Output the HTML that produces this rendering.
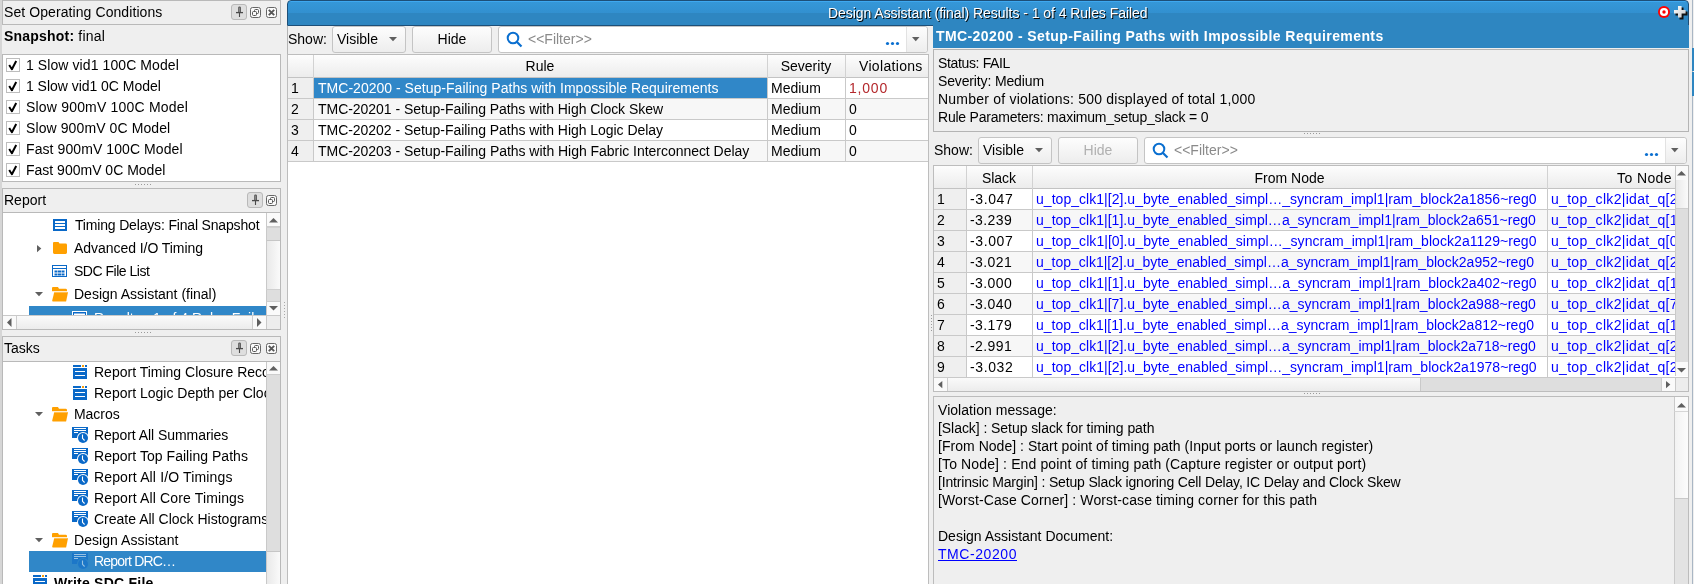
<!DOCTYPE html><html><head><meta charset="utf-8"><style>
*{margin:0;padding:0;box-sizing:border-box}
html,body{width:1694px;height:584px;overflow:hidden;background:#efefef;position:relative}
body{font-family:"Liberation Sans",sans-serif;font-size:14px;color:#000}
.t{position:absolute;white-space:pre;line-height:16px;will-change:transform}
.r{position:absolute}
.b{font-weight:bold}
.lnk{color:#0000ff}
svg{position:absolute;overflow:visible}
</style></head><body>
<div class="r" style="left:0px;top:0px;width:2px;height:584px;background:#d6d6d6"></div>
<div class="r" style="left:2px;top:0px;width:279px;height:25px;background:#efefef;border:1px solid #b9b9b9"></div>
<div class="t " style="left:4px;top:4px;letter-spacing:0.083px;">Set Operating Conditions</div>
<div class="r" style="left:231px;top:4px;width:16px;height:16px;background:#dedede;border:1px solid #b9b9b9;border-radius:3px"></div>
<svg style="left:231px;top:4px" width="16" height="16"><path d="M7.8 8.5V3.6Q7.8 3 8.5 3Q9.3 3 9.3 3.6V8.5" stroke="#4a4a4a" stroke-width="1.1" fill="none"/><path d="M5 8.6H12" stroke="#4a4a4a" stroke-width="1.3"/><path d="M8.5 8.6V13" stroke="#4a4a4a" stroke-width="1.1"/></svg>
<svg style="left:250px;top:7px" width="11" height="11"><rect x="0.5" y="0.5" width="10" height="10" rx="2" fill="#fafafa" stroke="#666"/><rect x="4.5" y="2.5" width="4" height="4" rx="1" fill="none" stroke="#555"/><rect x="2.5" y="4.5" width="4" height="4" rx="1" fill="#fafafa" stroke="#555"/></svg>
<svg style="left:266px;top:7px" width="11" height="11"><rect x="0.5" y="0.5" width="10" height="10" rx="2" fill="#fafafa" stroke="#666"/><path d="M2.8 2.8L8.2 8.2M8.2 2.8L2.8 8.2" stroke="#555" stroke-width="1.9"/></svg>
<div class="t " style="left:4px;top:28px;letter-spacing:0.2px"><b>Snapshot:</b> final</div>
<div class="r" style="left:2px;top:54px;width:279px;height:128px;background:#fff;border:1px solid #b9b9b9"></div>
<div class="r" style="left:6px;top:58px;width:14px;height:14px;background:#fff;border:1px solid #bdbdbd"></div>
<svg style="left:6px;top:58px" width="14" height="14"><path d="M3.2 7L5.9 11.2L10.2 3" stroke="#000" stroke-width="2" fill="none" stroke-linejoin="round"/></svg>
<div class="t " style="left:26px;top:57px;letter-spacing:0.086px;">1 Slow vid1 100C Model</div>
<div class="r" style="left:6px;top:79px;width:14px;height:14px;background:#fff;border:1px solid #bdbdbd"></div>
<svg style="left:6px;top:79px" width="14" height="14"><path d="M3.2 7L5.9 11.2L10.2 3" stroke="#000" stroke-width="2" fill="none" stroke-linejoin="round"/></svg>
<div class="t " style="left:26px;top:78px;letter-spacing:-0.032px;">1 Slow vid1 0C Model</div>
<div class="r" style="left:6px;top:100px;width:14px;height:14px;background:#fff;border:1px solid #bdbdbd"></div>
<svg style="left:6px;top:100px" width="14" height="14"><path d="M3.2 7L5.9 11.2L10.2 3" stroke="#000" stroke-width="2" fill="none" stroke-linejoin="round"/></svg>
<div class="t " style="left:26px;top:99px;letter-spacing:0.19px;">Slow 900mV 100C Model</div>
<div class="r" style="left:6px;top:121px;width:14px;height:14px;background:#fff;border:1px solid #bdbdbd"></div>
<svg style="left:6px;top:121px" width="14" height="14"><path d="M3.2 7L5.9 11.2L10.2 3" stroke="#000" stroke-width="2" fill="none" stroke-linejoin="round"/></svg>
<div class="t " style="left:26px;top:120px;letter-spacing:0.1px;">Slow 900mV 0C Model</div>
<div class="r" style="left:6px;top:142px;width:14px;height:14px;background:#fff;border:1px solid #bdbdbd"></div>
<svg style="left:6px;top:142px" width="14" height="14"><path d="M3.2 7L5.9 11.2L10.2 3" stroke="#000" stroke-width="2" fill="none" stroke-linejoin="round"/></svg>
<div class="t " style="left:26px;top:141px;letter-spacing:0.085px;">Fast 900mV 100C Model</div>
<div class="r" style="left:6px;top:163px;width:14px;height:14px;background:#fff;border:1px solid #bdbdbd"></div>
<svg style="left:6px;top:163px" width="14" height="14"><path d="M3.2 7L5.9 11.2L10.2 3" stroke="#000" stroke-width="2" fill="none" stroke-linejoin="round"/></svg>
<div class="t " style="left:26px;top:162px;">Fast 900mV 0C Model</div>
<div class="r" style="left:135px;top:184px;width:1px;height:1px;background:#9a9a9a"></div>
<div class="r" style="left:138px;top:184px;width:1px;height:1px;background:#9a9a9a"></div>
<div class="r" style="left:141px;top:184px;width:1px;height:1px;background:#9a9a9a"></div>
<div class="r" style="left:144px;top:184px;width:1px;height:1px;background:#9a9a9a"></div>
<div class="r" style="left:147px;top:184px;width:1px;height:1px;background:#9a9a9a"></div>
<div class="r" style="left:150px;top:184px;width:1px;height:1px;background:#9a9a9a"></div>
<div class="r" style="left:2px;top:188px;width:279px;height:25px;background:#efefef;border:1px solid #b9b9b9"></div>
<div class="t " style="left:4px;top:192px;">Report</div>
<div class="r" style="left:247px;top:192px;width:16px;height:16px;background:#dedede;border:1px solid #b9b9b9;border-radius:3px"></div>
<svg style="left:247px;top:192px" width="16" height="16"><path d="M7.8 8.5V3.6Q7.8 3 8.5 3Q9.3 3 9.3 3.6V8.5" stroke="#4a4a4a" stroke-width="1.1" fill="none"/><path d="M5 8.6H12" stroke="#4a4a4a" stroke-width="1.3"/><path d="M8.5 8.6V13" stroke="#4a4a4a" stroke-width="1.1"/></svg>
<svg style="left:266px;top:195px" width="11" height="11"><rect x="0.5" y="0.5" width="10" height="10" rx="2" fill="#fafafa" stroke="#666"/><rect x="4.5" y="2.5" width="4" height="4" rx="1" fill="none" stroke="#555"/><rect x="2.5" y="4.5" width="4" height="4" rx="1" fill="#fafafa" stroke="#555"/></svg>
<div class="r" style="left:2px;top:213px;width:279px;height:117px;background:#fff;border:1px solid #b9b9b9;border-top:none"></div>
<svg style="left:53px;top:219px" width="14" height="12"><rect x="0" y="0" width="14" height="12" fill="#0a69c8"/><rect x="2" y="2" width="10" height="2" fill="#fff"/><rect x="2" y="5" width="10" height="2" fill="#fff"/><rect x="2" y="8" width="10" height="2" fill="#fff"/></svg>
<div class="t " style="left:75px;top:217px;letter-spacing:-0.171px;">Timing Delays: Final Snapshot</div>
<svg style="left:37px;top:245px" width="6" height="8"><path d="M0 0L4.3 3.6L0 7.2Z" fill="#5f5f5f"/></svg>
<svg style="left:53px;top:242px" width="14" height="12"><path d="M0 1Q0 0 1 0H5.5L6.5 1.6H12.6Q14 1.6 14 3V10.6Q14 12 12.6 12H1.4Q0 12 0 10.6Z" fill="#ffa000"/></svg>
<div class="t " style="left:74px;top:240px;letter-spacing:-0.05px;">Advanced I/O Timing</div>
<svg style="left:52px;top:265px" width="15" height="12"><rect x="0.5" y="0.5" width="14" height="11" fill="#fff" stroke="#0a69c8"/><rect x="1" y="3" width="13" height="1" fill="#0a69c8"/><g fill="#0a69c8"><rect x="2.5" y="5.5" width="3" height="2"/><rect x="6" y="5.5" width="3" height="2"/><rect x="9.5" y="5.5" width="3" height="2"/><rect x="2.5" y="8.5" width="3" height="2"/><rect x="6" y="8.5" width="3" height="2"/><rect x="9.5" y="8.5" width="3" height="2"/></g></svg>
<div class="t " style="left:74px;top:263px;letter-spacing:-0.492px;">SDC File List</div>
<svg style="left:35px;top:292px" width="9" height="6"><path d="M0 0H8L4 4.3Z" fill="#5f5f5f"/></svg>
<svg style="left:52px;top:287px" width="17" height="15"><path d="M0 1Q0 0 1 0H6L7 1.8H13.6Q15 1.8 15 3V4.2H0Z" fill="#ffa000"/><path d="M0 4H15V5H0Z" fill="#ffa000"/><path d="M2.2 5.2H16L14.2 14.2Q14 14.6 13.5 14.6H1Q0 14.6 0.2 13.6Z" fill="#ffa000"/><path d="M0 4.6H15" stroke="#fff" stroke-width="0.9"/></svg>
<div class="t " style="left:74px;top:286px;">Design Assistant (final)</div>
<div class="r" style="left:29px;top:306px;width:237px;height:9px;background:#3087c8;overflow:hidden"></div>
<div class="r" style="left:29px;top:306px;width:237px;height:9px;overflow:hidden"><svg style="left:43px;top:5px" width="15" height="13"><rect x="0.5" y="0.5" width="14" height="12" fill="#0a69c8" stroke="#fff"/><rect x="2" y="2.5" width="11" height="2" fill="#fff"/></svg><div class="t" style="left:65px;top:4px;color:#fff">Results - 1 of 4 Rules Failed</div></div>
<div class="r" style="left:266px;top:213px;width:14px;height:102px;background:linear-gradient(to right,#e9e9e9,#fafafa);border-left:1px solid #c9c9c9"></div>
<div class="r" style="left:266px;top:213px;width:14px;height:14px;background:#fafafa;border-left:1px solid #c9c9c9;border-bottom:1px solid #cdcdcd"></div>
<svg style="left:269px;top:218px" width="9" height="5"><path d="M0 4.5L4.5 0L9 4.5Z" fill="#5f5f5f"/></svg>
<div class="r" style="left:266px;top:227px;width:14px;height:14px;background:#dedede;border-left:1px solid #c9c9c9;border-top:1px solid #d0d0d0;border-bottom:1px solid #c6c6c6"></div>
<div class="r" style="left:266px;top:301px;width:14px;height:14px;background:#fafafa;border-left:1px solid #c9c9c9;border-top:1px solid #cdcdcd"></div>
<svg style="left:269px;top:306px" width="9" height="5"><path d="M0 0H9L4.5 4.5Z" fill="#5f5f5f"/></svg>
<div class="r" style="left:266px;top:275px;width:14px;height:0px;"></div>
<div class="r" style="left:266px;top:289px;width:14px;height:12px;background:#dedede;border-left:1px solid #c9c9c9;border-top:1px solid #d0d0d0"></div>
<div class="r" style="left:3px;top:315px;width:263px;height:14px;background:linear-gradient(#fafafa,#ececec);border-top:1px solid #c9c9c9"></div>
<div class="r" style="left:3px;top:315px;width:14px;height:14px;background:#fafafa;border-top:1px solid #c9c9c9;border-right:1px solid #cdcdcd"></div>
<svg style="left:7px;top:318px" width="5" height="9"><path d="M4.5 0L0 4.5L4.5 9Z" fill="#5f5f5f"/></svg>
<div class="r" style="left:252px;top:315px;width:14px;height:14px;background:#fafafa;border-top:1px solid #c9c9c9;border-left:1px solid #cdcdcd"></div>
<svg style="left:257px;top:318px" width="5" height="9"><path d="M0 0L4.5 4.5L0 9Z" fill="#5f5f5f"/></svg>
<div class="r" style="left:266px;top:315px;width:14px;height:14px;background:#ededed;border-top:1px solid #c9c9c9;border-left:1px solid #c9c9c9"></div>
<div class="r" style="left:135px;top:332px;width:1px;height:1px;background:#9a9a9a"></div>
<div class="r" style="left:138px;top:332px;width:1px;height:1px;background:#9a9a9a"></div>
<div class="r" style="left:141px;top:332px;width:1px;height:1px;background:#9a9a9a"></div>
<div class="r" style="left:144px;top:332px;width:1px;height:1px;background:#9a9a9a"></div>
<div class="r" style="left:147px;top:332px;width:1px;height:1px;background:#9a9a9a"></div>
<div class="r" style="left:150px;top:332px;width:1px;height:1px;background:#9a9a9a"></div>
<div class="r" style="left:2px;top:336px;width:279px;height:26px;background:#efefef;border:1px solid #b9b9b9"></div>
<div class="t " style="left:4px;top:340px;">Tasks</div>
<div class="r" style="left:231px;top:340px;width:16px;height:16px;background:#dedede;border:1px solid #b9b9b9;border-radius:3px"></div>
<svg style="left:231px;top:340px" width="16" height="16"><path d="M7.8 8.5V3.6Q7.8 3 8.5 3Q9.3 3 9.3 3.6V8.5" stroke="#4a4a4a" stroke-width="1.1" fill="none"/><path d="M5 8.6H12" stroke="#4a4a4a" stroke-width="1.3"/><path d="M8.5 8.6V13" stroke="#4a4a4a" stroke-width="1.1"/></svg>
<svg style="left:250px;top:343px" width="11" height="11"><rect x="0.5" y="0.5" width="10" height="10" rx="2" fill="#fafafa" stroke="#666"/><rect x="4.5" y="2.5" width="4" height="4" rx="1" fill="none" stroke="#555"/><rect x="2.5" y="4.5" width="4" height="4" rx="1" fill="#fafafa" stroke="#555"/></svg>
<svg style="left:266px;top:343px" width="11" height="11"><rect x="0.5" y="0.5" width="10" height="10" rx="2" fill="#fafafa" stroke="#666"/><path d="M2.8 2.8L8.2 8.2M8.2 2.8L2.8 8.2" stroke="#555" stroke-width="1.9"/></svg>
<div class="r" style="left:2px;top:362px;width:279px;height:222px;background:#fff;border-left:1px solid #b9b9b9;border-right:1px solid #b9b9b9"></div>
<svg style="left:73px;top:365px" width="14" height="14"><rect x="0" y="0" width="8" height="2" fill="#0a69c8"/><rect x="9" y="0" width="2" height="2" fill="#f59d0b"/><rect x="12" y="0" width="2" height="2" fill="#0a69c8"/><rect x="0" y="3" width="14" height="11" fill="#0a69c8"/><rect x="2" y="6" width="10" height="1" fill="#fff"/><rect x="2" y="10" width="10" height="1" fill="#fff"/></svg>
<div class="t " style="left:94px;top:364px;">Report Timing Closure Recommendations</div>
<svg style="left:73px;top:386px" width="14" height="14"><rect x="0" y="0" width="8" height="2" fill="#0a69c8"/><rect x="9" y="0" width="2" height="2" fill="#f59d0b"/><rect x="12" y="0" width="2" height="2" fill="#0a69c8"/><rect x="0" y="3" width="14" height="11" fill="#0a69c8"/><rect x="2" y="6" width="10" height="1" fill="#fff"/><rect x="2" y="10" width="10" height="1" fill="#fff"/></svg>
<div class="t " style="left:94px;top:385px;">Report Logic Depth per Clock</div>
<svg style="left:35px;top:412px" width="9" height="6"><path d="M0 0H8L4 4.3Z" fill="#5f5f5f"/></svg>
<svg style="left:52px;top:407px" width="17" height="15"><path d="M0 1Q0 0 1 0H6L7 1.8H13.6Q15 1.8 15 3V4.2H0Z" fill="#ffa000"/><path d="M0 4H15V5H0Z" fill="#ffa000"/><path d="M2.2 5.2H16L14.2 14.2Q14 14.6 13.5 14.6H1Q0 14.6 0.2 13.6Z" fill="#ffa000"/><path d="M0 4.6H15" stroke="#fff" stroke-width="0.9"/></svg>
<div class="t " style="left:74px;top:406px;letter-spacing:-0.04px;">Macros</div>
<svg style="left:72px;top:427px;opacity:1" width="18" height="17"><rect x="0" y="0" width="16" height="11" fill="#0a69c8"/><rect x="2" y="1" width="12" height="1" fill="#fff"/><rect x="2" y="3" width="12" height="1" fill="#fff"/><rect x="2" y="5" width="4" height="1" fill="#fff"/><circle cx="11" cy="11" r="6" fill="#fff"/><circle cx="11" cy="11" r="5" fill="#0a69c8"/><path d="M10.5 7.5V11.3L12.6 13.5" stroke="#fff" stroke-width="1.1" fill="none"/></svg>
<div class="t " style="left:94px;top:427px;letter-spacing:-0.058px;">Report All Summaries</div>
<svg style="left:72px;top:448px;opacity:1" width="18" height="17"><rect x="0" y="0" width="16" height="11" fill="#0a69c8"/><rect x="2" y="1" width="12" height="1" fill="#fff"/><rect x="2" y="3" width="12" height="1" fill="#fff"/><rect x="2" y="5" width="4" height="1" fill="#fff"/><circle cx="11" cy="11" r="6" fill="#fff"/><circle cx="11" cy="11" r="5" fill="#0a69c8"/><path d="M10.5 7.5V11.3L12.6 13.5" stroke="#fff" stroke-width="1.1" fill="none"/></svg>
<div class="t " style="left:94px;top:448px;letter-spacing:0.039px;">Report Top Failing Paths</div>
<svg style="left:72px;top:469px;opacity:1" width="18" height="17"><rect x="0" y="0" width="16" height="11" fill="#0a69c8"/><rect x="2" y="1" width="12" height="1" fill="#fff"/><rect x="2" y="3" width="12" height="1" fill="#fff"/><rect x="2" y="5" width="4" height="1" fill="#fff"/><circle cx="11" cy="11" r="6" fill="#fff"/><circle cx="11" cy="11" r="5" fill="#0a69c8"/><path d="M10.5 7.5V11.3L12.6 13.5" stroke="#fff" stroke-width="1.1" fill="none"/></svg>
<div class="t " style="left:94px;top:469px;letter-spacing:0.143px;">Report All I/O Timings</div>
<svg style="left:72px;top:490px;opacity:1" width="18" height="17"><rect x="0" y="0" width="16" height="11" fill="#0a69c8"/><rect x="2" y="1" width="12" height="1" fill="#fff"/><rect x="2" y="3" width="12" height="1" fill="#fff"/><rect x="2" y="5" width="4" height="1" fill="#fff"/><circle cx="11" cy="11" r="6" fill="#fff"/><circle cx="11" cy="11" r="5" fill="#0a69c8"/><path d="M10.5 7.5V11.3L12.6 13.5" stroke="#fff" stroke-width="1.1" fill="none"/></svg>
<div class="t " style="left:94px;top:490px;letter-spacing:0.136px;">Report All Core Timings</div>
<svg style="left:72px;top:511px;opacity:1" width="18" height="17"><rect x="0" y="0" width="16" height="11" fill="#0a69c8"/><rect x="2" y="1" width="12" height="1" fill="#fff"/><rect x="2" y="3" width="12" height="1" fill="#fff"/><rect x="2" y="5" width="4" height="1" fill="#fff"/><circle cx="11" cy="11" r="6" fill="#fff"/><circle cx="11" cy="11" r="5" fill="#0a69c8"/><path d="M10.5 7.5V11.3L12.6 13.5" stroke="#fff" stroke-width="1.1" fill="none"/></svg>
<div class="t " style="left:94px;top:511px;">Create All Clock Histograms</div>
<svg style="left:35px;top:538px" width="9" height="6"><path d="M0 0H8L4 4.3Z" fill="#5f5f5f"/></svg>
<svg style="left:52px;top:533px" width="17" height="15"><path d="M0 1Q0 0 1 0H6L7 1.8H13.6Q15 1.8 15 3V4.2H0Z" fill="#ffa000"/><path d="M0 4H15V5H0Z" fill="#ffa000"/><path d="M2.2 5.2H16L14.2 14.2Q14 14.6 13.5 14.6H1Q0 14.6 0.2 13.6Z" fill="#ffa000"/><path d="M0 4.6H15" stroke="#fff" stroke-width="0.9"/></svg>
<div class="t " style="left:74px;top:532px;letter-spacing:0.06px;">Design Assistant</div>
<div class="r" style="left:29px;top:551px;width:237px;height:21px;background:#3087c8"></div>
<svg style="left:72px;top:553px;opacity:0.5" width="18" height="17"><rect x="0" y="0" width="16" height="11" fill="#0a69c8"/><rect x="2" y="1" width="12" height="1" fill="#fff"/><rect x="2" y="3" width="12" height="1" fill="#fff"/><rect x="2" y="5" width="4" height="1" fill="#fff"/><circle cx="11" cy="11" r="6" fill="#3087c8"/><circle cx="11" cy="11" r="5" fill="#0a69c8"/><path d="M10.5 7.5V11.3L12.6 13.5" stroke="#fff" stroke-width="1.1" fill="none"/></svg>
<div class="t " style="left:94px;top:553px;letter-spacing:-0.82px;color:#fff">Report DRC…</div>
<svg style="left:33px;top:575px" width="14" height="14"><rect x="0" y="0" width="8" height="2" fill="#0a69c8"/><rect x="9" y="0" width="2" height="2" fill="#f59d0b"/><rect x="12" y="0" width="2" height="2" fill="#0a69c8"/><rect x="0" y="3" width="14" height="11" fill="#0a69c8"/><rect x="2" y="6" width="10" height="1" fill="#fff"/><rect x="2" y="10" width="10" height="1" fill="#fff"/></svg>
<div class="t " style="left:54px;top:575px;letter-spacing:0.238px;font-weight:bold">Write SDC File</div>
<div class="r" style="left:266px;top:362px;width:14px;height:222px;background:linear-gradient(to right,#e9e9e9,#fafafa);border-left:1px solid #c9c9c9"></div>
<div class="r" style="left:266px;top:362px;width:14px;height:13px;background:#fafafa;border-left:1px solid #c9c9c9;border-bottom:1px solid #cdcdcd"></div>
<svg style="left:269px;top:366px" width="9" height="5"><path d="M0 4.5L4.5 0L9 4.5Z" fill="#5f5f5f"/></svg>
<div class="r" style="left:266px;top:375px;width:14px;height:177px;background:#dedede;border-left:1px solid #c9c9c9;border-bottom:1px solid #c6c6c6"></div>
<div class="r" style="left:281px;top:361px;width:6px;height:223px;background:#efefef"></div>
<div class="r" style="left:280px;top:361px;width:1px;height:223px;background:#b9b9b9"></div>
<div class="r" style="left:284px;top:302px;width:1px;height:1px;background:#a8a8a8"></div>
<div class="r" style="left:284px;top:305px;width:1px;height:1px;background:#a8a8a8"></div>
<div class="r" style="left:284px;top:308px;width:1px;height:1px;background:#a8a8a8"></div>
<div class="r" style="left:284px;top:311px;width:1px;height:1px;background:#a8a8a8"></div>
<div class="r" style="left:284px;top:314px;width:1px;height:1px;background:#a8a8a8"></div>
<div class="r" style="left:284px;top:317px;width:1px;height:1px;background:#a8a8a8"></div>
<div class="r" style="left:287px;top:0;width:1402px;height:26px;border:1px solid #1d4f78;border-radius:4px 4px 0 0;background:linear-gradient(#3ea8f0 0,#3ea8f0 1px,#3597d8 1px,#3290d0 12px,#2e86c1 12px,#2e86c1 100%)"></div>
<div class="t " style="left:828px;top:5px;letter-spacing:-0.049px;color:#fff;text-shadow:1px 1px 0 #0a0a0a">Design Assistant (final) Results - 1 of 4 Rules Failed</div>
<svg style="left:1656px;top:4px" width="16" height="16"><circle cx="8" cy="8" r="6" fill="#ff0000"/><circle cx="8" cy="8" r="4.1" fill="#fff"/><circle cx="8" cy="8" r="1.7" fill="#ff0000"/></svg>
<svg style="left:1673px;top:5px" width="16" height="16"><path d="M5.5 1.5h4v4h4v4h-4v4h-4v-4h-4v-4h4z" fill="#111" transform="translate(1,1)"/><defs><linearGradient id="cg" x1="0" y1="0" x2="1" y2="1"><stop offset="0" stop-color="#ffffff"/><stop offset="1" stop-color="#c8c8c8"/></linearGradient></defs><path d="M5 1h3.6v4h4v3.6h-4v4H5v-4H1V5h4z" fill="url(#cg)"/></svg>
<div class="r" style="left:1689px;top:26px;width:5px;height:558px;background:#efefef"></div>
<div class="r" style="left:1692px;top:0px;width:1px;height:584px;background:#a9b6c4"></div>
<div class="r" style="left:1692px;top:48px;width:2px;height:23px;background:#2e86c1"></div>
<div class="r" style="left:1692px;top:72px;width:2px;height:24px;background:#2e86c1"></div>
<div class="r" style="left:287px;top:26px;width:1px;height:558px;background:#b5b5b5"></div>
<div class="t " style="left:288px;top:31px;">Show:</div>
<div class="r" style="left:332px;top:26px;width:74px;height:27px;background:linear-gradient(#fdfdfd,#ededed);border:1px solid #c4c4c4;border-radius:3px"></div>
<div class="t " style="left:337px;top:31px;">Visible</div>
<svg style="left:389px;top:37px" width="9" height="5"><path d="M0 0H8L4 4.3Z" fill="#5f5f5f"/></svg>
<div class="r" style="left:412px;top:26px;width:80px;height:27px;background:linear-gradient(#fdfdfd,#ededed);border:1px solid #c4c4c4;border-radius:3px"></div>
<div class="t" style="left:412px;width:80px;text-align:center;top:31px;color:#000">Hide</div>
<div class="r" style="left:498px;top:26px;width:430px;height:27px;background:#fff;border:1px solid #c4c4c4;border-radius:3px"></div>
<div class="r" style="left:906px;top:27px;width:21px;height:25px;background:linear-gradient(#fdfdfd,#ededed);border-left:1px solid #e2e2e2;border-radius:0 3px 3px 0"></div>
<svg style="left:912px;top:37px" width="9" height="5"><path d="M0 0H7.5L3.75 4.2Z" fill="#5f5f5f"/></svg>
<svg style="left:506px;top:31px" width="18" height="18"><circle cx="7" cy="7" r="5.3" fill="none" stroke="#0a6fd0" stroke-width="2"/><path d="M11 11L15.5 15.5" stroke="#0a6fd0" stroke-width="2.2"/></svg>
<div class="t " style="left:528px;top:31px;color:#8a8a8a">&lt;&lt;Filter&gt;&gt;</div>
<svg style="left:885px;top:41px" width="14" height="5"><circle cx="2.5" cy="2.5" r="1.6" fill="#0a6fd0"/><circle cx="7.5" cy="2.5" r="1.6" fill="#0a6fd0"/><circle cx="12.5" cy="2.5" r="1.6" fill="#0a6fd0"/></svg>
<div class="r" style="left:287px;top:54px;width:642px;height:530px;background:#fff;border-top:1px solid #bdbdbd;border-left:1px solid #bdbdbd;border-right:1px solid #bdbdbd"></div>
<div class="r" style="left:288px;top:55px;width:640px;height:23px;background:linear-gradient(#fdfdfd,#ececec);border-bottom:1px solid #c3c3c3"></div>
<div class="r" style="left:313px;top:55px;width:1px;height:23px;background:#d2d2d2"></div>
<div class="r" style="left:767px;top:55px;width:1px;height:23px;background:#d2d2d2"></div>
<div class="r" style="left:845px;top:55px;width:1px;height:23px;background:#d2d2d2"></div>
<div class="t" style="left:313px;width:454px;text-align:center;top:58px">Rule</div>
<div class="t" style="left:767px;width:78px;text-align:center;top:58px">Severity</div>
<div class="t " style="left:859px;top:58px;letter-spacing:0.322px;">Violations</div>
<div class="r" style="left:288px;top:78px;width:640px;height:20px;background:#ffffff"></div>
<div class="r" style="left:288px;top:78px;width:25px;height:20px;background:#efefef"></div>
<div class="r" style="left:288px;top:98px;width:640px;height:1px;background:#c9c9c9"></div>
<div class="r" style="left:313px;top:78px;width:1px;height:21px;background:#c9c9c9"></div>
<div class="r" style="left:767px;top:78px;width:1px;height:21px;background:#c9c9c9"></div>
<div class="r" style="left:845px;top:78px;width:1px;height:21px;background:#c9c9c9"></div>
<div class="t " style="left:291px;top:80px;">1</div>
<div class="r" style="left:314px;top:78px;width:453px;height:20px;background:#3087c8"></div>
<div class="t " style="left:318px;top:80px;letter-spacing:0.022px;color:#fff">TMC-20200 - Setup-Failing Paths with Impossible Requirements</div>
<div class="t " style="left:849px;top:80px;letter-spacing:0.8px;color:#b4282c">1,000</div>
<div class="t " style="left:771px;top:80px;">Medium</div>
<div class="r" style="left:288px;top:99px;width:640px;height:20px;background:#f7f7f7"></div>
<div class="r" style="left:288px;top:99px;width:25px;height:20px;background:#efefef"></div>
<div class="r" style="left:288px;top:119px;width:640px;height:1px;background:#c9c9c9"></div>
<div class="r" style="left:313px;top:99px;width:1px;height:21px;background:#c9c9c9"></div>
<div class="r" style="left:767px;top:99px;width:1px;height:21px;background:#c9c9c9"></div>
<div class="r" style="left:845px;top:99px;width:1px;height:21px;background:#c9c9c9"></div>
<div class="t " style="left:291px;top:101px;">2</div>
<div class="t " style="left:318px;top:101px;letter-spacing:-0.039px;">TMC-20201 - Setup-Failing Paths with High Clock Skew</div>
<div class="t " style="left:849px;top:101px;">0</div>
<div class="t " style="left:771px;top:101px;">Medium</div>
<div class="r" style="left:288px;top:120px;width:640px;height:20px;background:#ffffff"></div>
<div class="r" style="left:288px;top:120px;width:25px;height:20px;background:#efefef"></div>
<div class="r" style="left:288px;top:140px;width:640px;height:1px;background:#c9c9c9"></div>
<div class="r" style="left:313px;top:120px;width:1px;height:21px;background:#c9c9c9"></div>
<div class="r" style="left:767px;top:120px;width:1px;height:21px;background:#c9c9c9"></div>
<div class="r" style="left:845px;top:120px;width:1px;height:21px;background:#c9c9c9"></div>
<div class="t " style="left:291px;top:122px;">3</div>
<div class="t " style="left:318px;top:122px;letter-spacing:-0.038px;">TMC-20202 - Setup-Failing Paths with High Logic Delay</div>
<div class="t " style="left:849px;top:122px;">0</div>
<div class="t " style="left:771px;top:122px;">Medium</div>
<div class="r" style="left:288px;top:141px;width:640px;height:20px;background:#f7f7f7"></div>
<div class="r" style="left:288px;top:141px;width:25px;height:20px;background:#efefef"></div>
<div class="r" style="left:288px;top:161px;width:640px;height:1px;background:#c9c9c9"></div>
<div class="r" style="left:313px;top:141px;width:1px;height:21px;background:#c9c9c9"></div>
<div class="r" style="left:767px;top:141px;width:1px;height:21px;background:#c9c9c9"></div>
<div class="r" style="left:845px;top:141px;width:1px;height:21px;background:#c9c9c9"></div>
<div class="t " style="left:291px;top:143px;">4</div>
<div class="t " style="left:318px;top:143px;letter-spacing:-0.033px;">TMC-20203 - Setup-Failing Paths with High Fabric Interconnect Delay</div>
<div class="t " style="left:849px;top:143px;">0</div>
<div class="t " style="left:771px;top:143px;">Medium</div>
<div class="r" style="left:929px;top:26px;width:760px;height:558px;background:#efefef"></div>
<div class="r" style="left:933px;top:25px;width:756px;height:23px;background:#2e86c1"></div>
<div class="t " style="left:936px;top:28px;letter-spacing:0.022px;color:#fff;font-weight:bold;letter-spacing:0.407px">TMC-20200 - Setup-Failing Paths with Impossible Requirements</div>
<div class="r" style="left:933px;top:49px;width:756px;height:83px;background:#efefef;border:1px solid #b4b4b4"></div>
<div class="t " style="left:938px;top:55px;letter-spacing:-0.355px;">Status: FAIL</div>
<div class="t " style="left:938px;top:73px;letter-spacing:-0.14px;">Severity: Medium</div>
<div class="t " style="left:938px;top:91px;letter-spacing:0.218px;">Number of violations: 500 displayed of total 1,000</div>
<div class="t " style="left:938px;top:109px;letter-spacing:-0.218px;">Rule Parameters: maximum_setup_slack = 0</div>
<div class="r" style="left:1304px;top:133px;width:1px;height:1px;background:#9a9a9a"></div>
<div class="r" style="left:1307px;top:133px;width:1px;height:1px;background:#9a9a9a"></div>
<div class="r" style="left:1310px;top:133px;width:1px;height:1px;background:#9a9a9a"></div>
<div class="r" style="left:1313px;top:133px;width:1px;height:1px;background:#9a9a9a"></div>
<div class="r" style="left:1316px;top:133px;width:1px;height:1px;background:#9a9a9a"></div>
<div class="r" style="left:1319px;top:133px;width:1px;height:1px;background:#9a9a9a"></div>
<div class="r" style="left:931px;top:315px;width:1px;height:1px;background:#9a9a9a"></div>
<div class="r" style="left:931px;top:318px;width:1px;height:1px;background:#9a9a9a"></div>
<div class="r" style="left:931px;top:321px;width:1px;height:1px;background:#9a9a9a"></div>
<div class="r" style="left:931px;top:324px;width:1px;height:1px;background:#9a9a9a"></div>
<div class="r" style="left:931px;top:327px;width:1px;height:1px;background:#9a9a9a"></div>
<div class="r" style="left:931px;top:330px;width:1px;height:1px;background:#9a9a9a"></div>
<div class="t " style="left:934px;top:142px;">Show:</div>
<div class="r" style="left:978px;top:137px;width:74px;height:27px;background:linear-gradient(#fdfdfd,#ededed);border:1px solid #c4c4c4;border-radius:3px"></div>
<div class="t " style="left:983px;top:142px;">Visible</div>
<svg style="left:1035px;top:148px" width="9" height="5"><path d="M0 0H8L4 4.3Z" fill="#5f5f5f"/></svg>
<div class="r" style="left:1058px;top:137px;width:80px;height:27px;background:linear-gradient(#fdfdfd,#ededed);border:1px solid #c4c4c4;border-radius:3px"></div>
<div class="t" style="left:1058px;width:80px;text-align:center;top:142px;color:#b0b0b0">Hide</div>
<div class="r" style="left:1144px;top:137px;width:543px;height:27px;background:#fff;border:1px solid #c4c4c4;border-radius:3px"></div>
<div class="r" style="left:1665px;top:138px;width:21px;height:25px;background:linear-gradient(#fdfdfd,#ededed);border-left:1px solid #e2e2e2;border-radius:0 3px 3px 0"></div>
<svg style="left:1671px;top:148px" width="9" height="5"><path d="M0 0H7.5L3.75 4.2Z" fill="#5f5f5f"/></svg>
<svg style="left:1152px;top:142px" width="18" height="18"><circle cx="7" cy="7" r="5.3" fill="none" stroke="#0a6fd0" stroke-width="2"/><path d="M11 11L15.5 15.5" stroke="#0a6fd0" stroke-width="2.2"/></svg>
<div class="t " style="left:1174px;top:142px;color:#8a8a8a">&lt;&lt;Filter&gt;&gt;</div>
<svg style="left:1644px;top:152px" width="14" height="5"><circle cx="2.5" cy="2.5" r="1.6" fill="#0a6fd0"/><circle cx="7.5" cy="2.5" r="1.6" fill="#0a6fd0"/><circle cx="12.5" cy="2.5" r="1.6" fill="#0a6fd0"/></svg>
<div class="r" style="left:933px;top:165px;width:756px;height:227px;background:#fff;border:1px solid #bdbdbd"></div>
<div class="r" style="left:934px;top:166px;width:741px;height:23px;background:linear-gradient(#fdfdfd,#ececec);border-bottom:1px solid #c3c3c3"></div>
<div class="r" style="left:966px;top:166px;width:1px;height:23px;background:#d2d2d2"></div>
<div class="r" style="left:1032px;top:166px;width:1px;height:23px;background:#d2d2d2"></div>
<div class="r" style="left:1547px;top:166px;width:1px;height:23px;background:#d2d2d2"></div>
<div class="t" style="left:966px;width:66px;text-align:center;top:170px">Slack</div>
<div class="t" style="left:1032px;width:515px;text-align:center;top:170px">From Node</div>
<div class="t" style="left:1547px;width:125px;text-align:right;top:170px;letter-spacing:0.4px">To Node</div>
<div class="r" style="left:934px;top:189px;width:741px;height:20px;background:#ffffff"></div>
<div class="r" style="left:934px;top:189px;width:32px;height:20px;background:#efefef"></div>
<div class="r" style="left:934px;top:209px;width:741px;height:1px;background:#c9c9c9"></div>
<div class="r" style="left:966px;top:189px;width:1px;height:21px;background:#c9c9c9"></div>
<div class="r" style="left:1032px;top:189px;width:1px;height:21px;background:#c9c9c9"></div>
<div class="r" style="left:1547px;top:189px;width:1px;height:21px;background:#c9c9c9"></div>
<div class="t " style="left:937px;top:191px;">1</div>
<div class="t " style="left:970px;top:191px;letter-spacing:0.62px;">-3.047</div>
<div class="t " style="left:1036px;top:191px;letter-spacing:0.036px;color:#0000ff">u_top_clk1|[2].u_byte_enabled_simpl…_syncram_impl1|ram_block2a1856~reg0</div>
<div class="r" style="left:1548px;top:189px;width:127px;height:20px;overflow:hidden"><div class="t lnk" style="left:3px;top:2px;letter-spacing:0.3px">u_top_clk2|idat_q[2</div></div>
<div class="r" style="left:934px;top:210px;width:741px;height:20px;background:#f7f7f7"></div>
<div class="r" style="left:934px;top:210px;width:32px;height:20px;background:#efefef"></div>
<div class="r" style="left:934px;top:230px;width:741px;height:1px;background:#c9c9c9"></div>
<div class="r" style="left:966px;top:210px;width:1px;height:21px;background:#c9c9c9"></div>
<div class="r" style="left:1032px;top:210px;width:1px;height:21px;background:#c9c9c9"></div>
<div class="r" style="left:1547px;top:210px;width:1px;height:21px;background:#c9c9c9"></div>
<div class="t " style="left:937px;top:212px;">2</div>
<div class="t " style="left:970px;top:212px;letter-spacing:0.42px;">-3.239</div>
<div class="t " style="left:1036px;top:212px;letter-spacing:0.027px;color:#0000ff">u_top_clk1|[1].u_byte_enabled_simpl…a_syncram_impl1|ram_block2a651~reg0</div>
<div class="r" style="left:1548px;top:210px;width:127px;height:20px;overflow:hidden"><div class="t lnk" style="left:3px;top:2px;letter-spacing:0.3px">u_top_clk2|idat_q[1</div></div>
<div class="r" style="left:934px;top:231px;width:741px;height:20px;background:#ffffff"></div>
<div class="r" style="left:934px;top:231px;width:32px;height:20px;background:#efefef"></div>
<div class="r" style="left:934px;top:251px;width:741px;height:1px;background:#c9c9c9"></div>
<div class="r" style="left:966px;top:231px;width:1px;height:21px;background:#c9c9c9"></div>
<div class="r" style="left:1032px;top:231px;width:1px;height:21px;background:#c9c9c9"></div>
<div class="r" style="left:1547px;top:231px;width:1px;height:21px;background:#c9c9c9"></div>
<div class="t " style="left:937px;top:233px;">3</div>
<div class="t " style="left:970px;top:233px;letter-spacing:0.62px;">-3.007</div>
<div class="t " style="left:1036px;top:233px;letter-spacing:0.05px;color:#0000ff">u_top_clk1|[0].u_byte_enabled_simpl…_syncram_impl1|ram_block2a1129~reg0</div>
<div class="r" style="left:1548px;top:231px;width:127px;height:20px;overflow:hidden"><div class="t lnk" style="left:3px;top:2px;letter-spacing:0.3px">u_top_clk2|idat_q[0</div></div>
<div class="r" style="left:934px;top:252px;width:741px;height:20px;background:#f7f7f7"></div>
<div class="r" style="left:934px;top:252px;width:32px;height:20px;background:#efefef"></div>
<div class="r" style="left:934px;top:272px;width:741px;height:1px;background:#c9c9c9"></div>
<div class="r" style="left:966px;top:252px;width:1px;height:21px;background:#c9c9c9"></div>
<div class="r" style="left:1032px;top:252px;width:1px;height:21px;background:#c9c9c9"></div>
<div class="r" style="left:1547px;top:252px;width:1px;height:21px;background:#c9c9c9"></div>
<div class="t " style="left:937px;top:254px;">4</div>
<div class="t " style="left:970px;top:254px;letter-spacing:0.42px;">-3.021</div>
<div class="t " style="left:1036px;top:254px;color:#0000ff">u_top_clk1|[2].u_byte_enabled_simpl…a_syncram_impl1|ram_block2a952~reg0</div>
<div class="r" style="left:1548px;top:252px;width:127px;height:20px;overflow:hidden"><div class="t lnk" style="left:3px;top:2px;letter-spacing:0.3px">u_top_clk2|idat_q[2</div></div>
<div class="r" style="left:934px;top:273px;width:741px;height:20px;background:#ffffff"></div>
<div class="r" style="left:934px;top:273px;width:32px;height:20px;background:#efefef"></div>
<div class="r" style="left:934px;top:293px;width:741px;height:1px;background:#c9c9c9"></div>
<div class="r" style="left:966px;top:273px;width:1px;height:21px;background:#c9c9c9"></div>
<div class="r" style="left:1032px;top:273px;width:1px;height:21px;background:#c9c9c9"></div>
<div class="r" style="left:1547px;top:273px;width:1px;height:21px;background:#c9c9c9"></div>
<div class="t " style="left:937px;top:275px;">5</div>
<div class="t " style="left:970px;top:275px;letter-spacing:0.42px;">-3.000</div>
<div class="t " style="left:1036px;top:275px;letter-spacing:0.036px;color:#0000ff">u_top_clk1|[1].u_byte_enabled_simpl…a_syncram_impl1|ram_block2a402~reg0</div>
<div class="r" style="left:1548px;top:273px;width:127px;height:20px;overflow:hidden"><div class="t lnk" style="left:3px;top:2px;letter-spacing:0.3px">u_top_clk2|idat_q[1</div></div>
<div class="r" style="left:934px;top:294px;width:741px;height:20px;background:#f7f7f7"></div>
<div class="r" style="left:934px;top:294px;width:32px;height:20px;background:#efefef"></div>
<div class="r" style="left:934px;top:314px;width:741px;height:1px;background:#c9c9c9"></div>
<div class="r" style="left:966px;top:294px;width:1px;height:21px;background:#c9c9c9"></div>
<div class="r" style="left:1032px;top:294px;width:1px;height:21px;background:#c9c9c9"></div>
<div class="r" style="left:1547px;top:294px;width:1px;height:21px;background:#c9c9c9"></div>
<div class="t " style="left:937px;top:296px;">6</div>
<div class="t " style="left:970px;top:296px;letter-spacing:0.42px;">-3.040</div>
<div class="t " style="left:1036px;top:296px;letter-spacing:0.027px;color:#0000ff">u_top_clk1|[7].u_byte_enabled_simpl…a_syncram_impl1|ram_block2a988~reg0</div>
<div class="r" style="left:1548px;top:294px;width:127px;height:20px;overflow:hidden"><div class="t lnk" style="left:3px;top:2px;letter-spacing:0.3px">u_top_clk2|idat_q[7</div></div>
<div class="r" style="left:934px;top:315px;width:741px;height:20px;background:#ffffff"></div>
<div class="r" style="left:934px;top:315px;width:32px;height:20px;background:#efefef"></div>
<div class="r" style="left:934px;top:335px;width:741px;height:1px;background:#c9c9c9"></div>
<div class="r" style="left:966px;top:315px;width:1px;height:21px;background:#c9c9c9"></div>
<div class="r" style="left:1032px;top:315px;width:1px;height:21px;background:#c9c9c9"></div>
<div class="r" style="left:1547px;top:315px;width:1px;height:21px;background:#c9c9c9"></div>
<div class="t " style="left:937px;top:317px;">7</div>
<div class="t " style="left:970px;top:317px;letter-spacing:0.42px;">-3.179</div>
<div class="t " style="left:1036px;top:317px;color:#0000ff">u_top_clk1|[1].u_byte_enabled_simpl…a_syncram_impl1|ram_block2a812~reg0</div>
<div class="r" style="left:1548px;top:315px;width:127px;height:20px;overflow:hidden"><div class="t lnk" style="left:3px;top:2px;letter-spacing:0.3px">u_top_clk2|idat_q[1</div></div>
<div class="r" style="left:934px;top:336px;width:741px;height:20px;background:#f7f7f7"></div>
<div class="r" style="left:934px;top:336px;width:32px;height:20px;background:#efefef"></div>
<div class="r" style="left:934px;top:356px;width:741px;height:1px;background:#c9c9c9"></div>
<div class="r" style="left:966px;top:336px;width:1px;height:21px;background:#c9c9c9"></div>
<div class="r" style="left:1032px;top:336px;width:1px;height:21px;background:#c9c9c9"></div>
<div class="r" style="left:1547px;top:336px;width:1px;height:21px;background:#c9c9c9"></div>
<div class="t " style="left:937px;top:338px;">8</div>
<div class="t " style="left:970px;top:338px;letter-spacing:0.42px;">-2.991</div>
<div class="t " style="left:1036px;top:338px;letter-spacing:0.027px;color:#0000ff">u_top_clk1|[2].u_byte_enabled_simpl…a_syncram_impl1|ram_block2a718~reg0</div>
<div class="r" style="left:1548px;top:336px;width:127px;height:20px;overflow:hidden"><div class="t lnk" style="left:3px;top:2px;letter-spacing:0.3px">u_top_clk2|idat_q[2</div></div>
<div class="r" style="left:934px;top:357px;width:741px;height:20px;background:#ffffff"></div>
<div class="r" style="left:934px;top:357px;width:32px;height:20px;background:#efefef"></div>
<div class="r" style="left:934px;top:377px;width:741px;height:1px;background:#c9c9c9"></div>
<div class="r" style="left:966px;top:357px;width:1px;height:21px;background:#c9c9c9"></div>
<div class="r" style="left:1032px;top:357px;width:1px;height:21px;background:#c9c9c9"></div>
<div class="r" style="left:1547px;top:357px;width:1px;height:21px;background:#c9c9c9"></div>
<div class="t " style="left:937px;top:359px;">9</div>
<div class="t " style="left:970px;top:359px;letter-spacing:0.62px;">-3.032</div>
<div class="t " style="left:1036px;top:359px;letter-spacing:0.036px;color:#0000ff">u_top_clk1|[2].u_byte_enabled_simpl…_syncram_impl1|ram_block2a1978~reg0</div>
<div class="r" style="left:1548px;top:357px;width:127px;height:20px;overflow:hidden"><div class="t lnk" style="left:3px;top:2px;letter-spacing:0.3px">u_top_clk2|idat_q[2</div></div>
<div class="r" style="left:1675px;top:166px;width:13px;height:210px;background:linear-gradient(to right,#e9e9e9,#fafafa);border-left:1px solid #c9c9c9"></div>
<div class="r" style="left:1675px;top:166px;width:13px;height:14px;background:#fafafa;border-left:1px solid #c9c9c9"></div>
<svg style="left:1677px;top:171px" width="9" height="5"><path d="M0 4.5L4.5 0L9 4.5Z" fill="#5f5f5f"/></svg>
<div class="r" style="left:1675px;top:208px;width:13px;height:154px;background:#dedede;border-left:1px solid #c9c9c9;border-top:1px solid #cfcfcf"></div>
<div class="r" style="left:1675px;top:362px;width:13px;height:14px;background:#fafafa;border-left:1px solid #c9c9c9"></div>
<svg style="left:1677px;top:368px" width="9" height="5"><path d="M0 0H9L4.5 4.5Z" fill="#5f5f5f"/></svg>
<div class="r" style="left:934px;top:377px;width:741px;height:14px;background:linear-gradient(#fafafa,#ececec);border-top:1px solid #c9c9c9"></div>
<div class="r" style="left:934px;top:377px;width:14px;height:14px;background:#fafafa;border-top:1px solid #c9c9c9;border-right:1px solid #cdcdcd"></div>
<svg style="left:938px;top:381px" width="5" height="8"><path d="M4.3 0L0 3.6L4.3 7.2Z" fill="#5f5f5f"/></svg>
<div class="r" style="left:1420px;top:378px;width:242px;height:13px;background:#dedede;border-left:1px solid #c9c9c9"></div>
<div class="r" style="left:1661px;top:377px;width:14px;height:14px;background:#fafafa;border-top:1px solid #c9c9c9;border-left:1px solid #cdcdcd"></div>
<svg style="left:1666px;top:381px" width="5" height="8"><path d="M0 0L4.3 3.6L0 7.2Z" fill="#5f5f5f"/></svg>
<div class="r" style="left:1675px;top:377px;width:13px;height:14px;background:#ededed;border-top:1px solid #c9c9c9;border-left:1px solid #c9c9c9"></div>
<div class="r" style="left:1304px;top:393px;width:1px;height:1px;background:#9a9a9a"></div>
<div class="r" style="left:1307px;top:393px;width:1px;height:1px;background:#9a9a9a"></div>
<div class="r" style="left:1310px;top:393px;width:1px;height:1px;background:#9a9a9a"></div>
<div class="r" style="left:1313px;top:393px;width:1px;height:1px;background:#9a9a9a"></div>
<div class="r" style="left:1316px;top:393px;width:1px;height:1px;background:#9a9a9a"></div>
<div class="r" style="left:1319px;top:393px;width:1px;height:1px;background:#9a9a9a"></div>
<div class="r" style="left:933px;top:396px;width:756px;height:188px;background:#efefef;border:1px solid #bcbcbc;border-bottom:none"></div>
<div class="t " style="left:938px;top:402px;letter-spacing:0.041px;">Violation message:</div>
<div class="t " style="left:938px;top:420px;letter-spacing:-0.061px;">[Slack] : Setup slack for timing path</div>
<div class="t " style="left:938px;top:438px;letter-spacing:0.035px;">[From Node] : Start point of timing path (Input ports or launch register)</div>
<div class="t " style="left:938px;top:456px;letter-spacing:0.128px;">[To Node] : End point of timing path (Capture register or output port)</div>
<div class="t " style="left:938px;top:474px;letter-spacing:-0.164px;">[Intrinsic Margin] : Setup Slack ignoring Cell Delay, IC Delay and Clock Skew</div>
<div class="t " style="left:938px;top:492px;letter-spacing:0.117px;">[Worst-Case Corner] : Worst-case timing corner for this path</div>
<div class="t " style="left:938px;top:528px;">Design Assistant Document:</div>
<div class="t " style="left:938px;top:546px;letter-spacing:0.562px;color:#0000ff;text-decoration:underline">TMC-20200</div>
<div class="r" style="left:1674px;top:397px;width:14px;height:187px;background:#e3e3e3;border-left:1px solid #c9c9c9"></div>
<div class="r" style="left:1674px;top:397px;width:14px;height:15px;background:#fafafa;border-left:1px solid #c9c9c9;border-bottom:1px solid #d6d6d6"></div>
<svg style="left:1677px;top:403px" width="9" height="5"><path d="M0 4.5L4.5 0L9 4.5Z" fill="#5f5f5f"/></svg>
<div class="r" style="left:1674px;top:412px;width:14px;height:87px;background:linear-gradient(to right,#f2f2f2,#fcfcfc);border-left:1px solid #c9c9c9;border-bottom:1px solid #c9c9c9"></div>
</body></html>
